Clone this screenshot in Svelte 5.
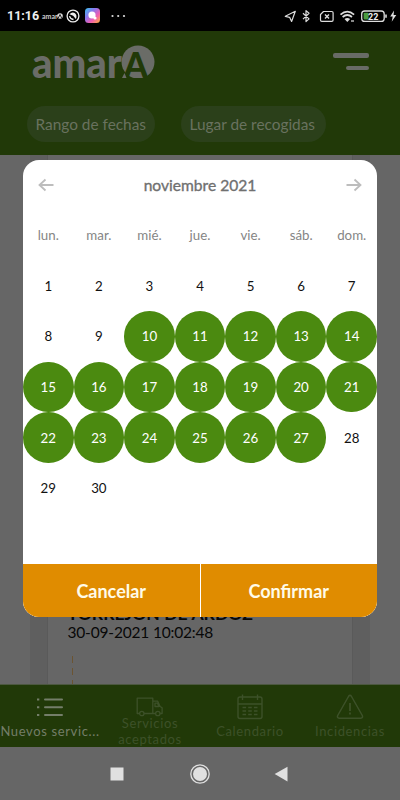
<script>
  const weekdays = ['lun.', 'mar.', 'mié.', 'jue.', 'vie.', 'sáb.', 'dom.'];
  const days = Array.from({ length: 30 }, (_, i) => i + 1);
  const inRange = (day) => day >= 10 && day <= 27;
</script>

<div class="screen">
  <div class="status">
    <span class="clock">11:16</span>
    <span class="mini">amar</span>
    <svg class="minidot" width="6" height="6" viewBox="0 0 6 6"><circle cx="3" cy="3" r="2.8" fill="#ddd" /><path d="M1.3 5 3 1.5 4.6 5" stroke="#222" fill="none" /></svg>
    <svg class="disc" width="14" height="14" viewBox="0 0 14 14"><circle cx="7" cy="7" r="5.9" fill="none" stroke="#eee" stroke-width="1.3" /><path d="M3.500 5.200Q6 2.500 9 4.200 11.500 6.500 9.800 10L7.200 6.800Z" fill="#eee" /><path d="M3.500 7.200q.8 3 4 3.300" fill="none" stroke="#eee" stroke-width="1.300" /></svg>
    <svg class="gallery" width="15" height="15" viewBox="0 0 15 15">
      <defs><linearGradient id="rainbow" x1="0" y1="0" x2="1" y2="1"><stop offset="0" stop-color="#35c5ee" /><stop offset=".35" stop-color="#8978ee" /><stop offset=".65" stop-color="#ef5db2" /><stop offset="1" stop-color="#ffb43b" /></linearGradient></defs>
      <rect width="15" height="15" rx="3.5" fill="url(#rainbow)" /><circle cx="7" cy="7" r="3.6" fill="#fff" /><circle cx="10" cy="10" r="1.6" fill="#fff" />
    </svg>
    <svg class="more" width="15" height="4" viewBox="0 0 15 4" fill="#ddd"><circle cx="1.5" cy="2" r="1.1" /><circle cx="7.2" cy="2" r="1.1" /><circle cx="13" cy="2" r="1.1" /></svg>
    <svg class="system" width="116" height="16" viewBox="284 7 116 16" fill="none" stroke="#ddd" stroke-width="1.2" stroke-linejoin="round">
      <path d="m285.3 15.3 10-5-3.7 10.2-2-4.2Z" />
      <path d="m303 12.2 6 5.7-3 2.7V9.6l3 2.7-6 5.8" />
      <path d="M323.5 10.5h8.3q1.3 0 1.3 1.3v7.2q0 1.3-1.3 1.3h-10q-1.3 0-1.3-1.3v-5.5Z" /><path d="m325 13.5 4 4m0-4-4 4" stroke-width="1.4" />
      <path d="M340.500 13.600q6.800-5.800 13.600 0M342.600 16q4.700-4 9.400 0" stroke-width="1.700" /><path d="M344.500 18q2.800-2.200 5.600 0l-2.800 3Z" fill="#ddd" stroke="none" /><path d="M351 19h3v2h-3Z" fill="#888" stroke="none" />
      <rect x="361.700" y="10" width="22.500" height="10.400" rx="3" stroke-width="1.300" /><rect x="363.600" y="11.800" width="5" height="6.800" rx="1" fill="#4b9b40" stroke="none" /><path d="M386 13.500v3.200" stroke-width="1.600" />
      <text x="373.200" y="18.500" text-anchor="middle" fill="#eee" stroke="none" font-family="Roboto, sans-serif" font-size="9" font-weight="700">22</text>
      <path d="m394 9.500-3.800 6h2.500l-1 5.200 4.600-6.800h-2.700Z" fill="#ddd" stroke="none" />
    </svg>
  </div>

  <header>
    <div class="brand">
      <svg class="logo" width="126" height="48" viewBox="0 0 126 48">
        <defs><clipPath id="badge"><path d="M88 0h38v29.500L117 33H88Z" /></clipPath></defs>
        <text x="0" y="33" font-family="Lato, sans-serif" font-size="42.500" font-weight="900" textLength="90" lengthAdjust="spacingAndGlyphs" fill="#6a6c67">amar</text>
        <circle cx="106" cy="17" r="16.500" fill="#6a6c67" clip-path="url(#badge)" />
        <text x="91.500" y="33" font-family="Lato, sans-serif" font-size="35.500" font-weight="900" textLength="24.500" lengthAdjust="spacingAndGlyphs" fill="#213908">A</text>
        <path d="M90 33 92.500 28l2 5Z" fill="#6a6c67" />
      </svg>
      <div class="burger"><i></i><i></i></div>
    </div>
    <div class="filters">
      <span class="chip dates">Rango de fechas</span>
      <span class="chip place">Lugar de recogidas</span>
    </div>
  </header>

  <main>
    <div class="track">
      <article>
        <div class="town">TORREJON DE ARDOZ</div>
        <div class="stamp">30-09-2021 10:02:48</div>
        <div class="dash"></div>
      </article>
    </div>
  </main>

  <nav class="tabs">
    <div class="tab active">
      <svg width="28" height="28" viewBox="0 0 28 28" fill="none" stroke="currentColor" stroke-width="2"><path d="M9 5.500h17M9 13.200h17M9 21h17" stroke-linecap="round" /><path d="M1 5.500h2.300M1 13.200h2.300M1 21h2.300" /></svg>
      <span>Nuevos servic...</span>
    </div>
    <div class="tab">
      <svg width="28" height="28" viewBox="0 0 28 28" fill="none" stroke="currentColor" stroke-width="1.300" stroke-linejoin="round"><path d="M3.500 19.500H1.200V4.200h15.600v15.300H8M17 7.200h4.700l2.400 5.300 2 1.200v5.800h-2M19 19.500h-2M19 9.200h2.500l1.500 3.300h-4Z" /><circle cx="5.800" cy="19.500" r="2.200" /><circle cx="21.800" cy="19.500" r="2.200" /></svg>
      <span class="two">Servicios<br />aceptados</span>
    </div>
    <div class="tab">
      <svg width="28" height="28" viewBox="0 0 28 28" fill="none" stroke="currentColor" stroke-width="1.400"><rect x="2" y="3" width="24" height="21.500" rx="2" /><path d="M2 10h24M6.500 .5v5.500M21.500 .5v5.500" /><path d="M6.500 13.500h15M6.500 17h15M6.500 20.500h15" stroke-dasharray="3.600 2.100" stroke-width="1.500" /></svg>
      <span>Calendario</span>
    </div>
    <div class="tab">
      <svg width="28" height="28" viewBox="0 0 28 28" fill="none" stroke="currentColor" stroke-width="1.500" stroke-linejoin="round"><path d="M12.500 2.500Q14 .2 15.500 2.500L26.300 21.500q1 2.500-1.500 2.800H3.200Q.7 24 1.700 21.500Z" /><path d="M14 9v8M14 18.500v2" stroke-width="1.800" /></svg>
      <span>Incidencias</span>
    </div>
  </nav>

  <div class="system-nav">
    <svg width="200" height="24" viewBox="0 0 200 24" fill="#e0e0e0"><rect x="10.500" y="6.500" width="13" height="13" /><circle cx="100" cy="13" r="7" /><circle cx="100" cy="13" r="9.200" fill="none" stroke="#e0e0e0" stroke-width="1.300" /><path d="M187.500 5.700v14.800l-12.800-7.400Z" /></svg>
  </div>

  <section class="dialog">
    <div class="month">
      <svg width="16" height="14" viewBox="0 0 16 14"><path d="M15.500 7H1.500M7.500 1.500 1.500 7l6 5.500" /></svg>
      <h2>noviembre 2021</h2>
      <svg width="16" height="14" viewBox="0 0 16 14"><path d="M.5 7h14M8.500 1.500l6 5.500-6 5.500" /></svg>
    </div>
    <div class="grid">
      {#each weekdays as name}<span class="weekday">{name}</span>{/each}
      {#each days as day}<span class="day" class:selected={inRange(day)}>{day}</span>{/each}
    </div>
    <div class="actions"><button>Cancelar</button><button>Confirmar</button></div>
  </section>
</div>

<style>
  .screen { position: relative; width: 400px; height: 800px; display: flex; flex-direction: column; overflow: hidden; background: #666; font-family: Lato, "Noto Sans", sans-serif; }
  .screen * { box-sizing: border-box; }
  svg { display: block; flex: none; }
  .logo { overflow: visible; }
  .status { height: 31px; flex: none; background: #000; display: flex; align-items: center; padding-left: 7px; }
  .clock { width: 33px; color: #eee; font: 700 12.500px/16px Roboto, sans-serif; white-space: nowrap; }
  .mini { color: #ccc; font-size: 7px; font-weight: 700; margin-left: 2px; width: 15px; }
  .disc { margin-left: 3px; }
  .gallery { margin-left: 5px; }
  .more { margin-left: 11px; }
  .system { margin-left: auto; }
  header { height: 124px; flex: none; background: #213908; }
  .brand { height: 75px; display: flex; justify-content: space-between; align-items: flex-start; padding: 14px 31px 0 32px; }
  .burger { width: 36px; padding-top: 8px; display: flex; flex-direction: column; align-items: flex-end; gap: 8px; }
  .burger i { width: 36px; height: 4.500px; border-radius: 2px; background: #686b66; }
  .burger i + i { width: 23px; }
  .filters { display: flex; gap: 26px; padding-left: 27px; }
  .chip { height: 36px; border-radius: 18px; background: #2b401a; color: #69725f; font-size: 15.400px; line-height: 36px; white-space: nowrap; padding-left: 8.500px; }
  .dates { width: 128px; }
  .place { width: 145px; }
  main { height: 529px; flex: none; display: flex; justify-content: center; }
  .track { width: 340px; background: #5f5f5f; display: flex; justify-content: center; }
  article { width: 306px; background: #666; padding: 450px 0 0 19.500px; border: solid #5a5a5a; border-width: 0 1px; color: #080808; }
  .town { font-size: 17.600px; line-height: 18px; font-weight: 700; }
  .stamp { font-size: 15.500px; line-height: 18px; letter-spacing: -.18px; }
  .dash { margin: 15px 0 0 4px; height: 28px; width: 1.500px; background: repeating-linear-gradient(#6b5432 0 7px, transparent 7px 12px); }
  .tabs { height: 63px; flex: none; background: #213908; border-top: 1px solid #4c5840; display: grid; grid-template-columns: repeat(4, 100px); color: #3d5129; }
  .tab { display: flex; flex-direction: column; align-items: center; padding-top: 9px; font-size: 13px; line-height: 16px; letter-spacing: .63px; text-align: center; white-space: nowrap; }
  .tab span { margin-top: 1px; }
  .tab .two { margin-top: -7px; }
  .active { color: #747e69; }
  .system-nav { height: 53px; flex: none; display: flex; justify-content: center; padding-top: 14px; }
  .dialog { position: absolute; left: 23px; top: 160px; width: 354px; height: 457px; border-radius: 16px; overflow: hidden; background: #fff; display: flex; flex-direction: column; }
  .month { height: 50px; flex: none; display: flex; align-items: center; justify-content: space-between; padding: 0 15px; }
  .month path { fill: none; stroke: #bdbdbd; stroke-width: 1.800; }
  h2 { margin: 0; color: #707070; font-size: 15.600px; font-weight: 400; -webkit-text-stroke: .35px #707070; line-height: 20px; }
  .grid { flex: 1; display: grid; grid-template-columns: repeat(7, 1fr); grid-auto-rows: 50.571px; align-content: start; }
  .grid span { display: flex; align-items: center; justify-content: center; font-size: 13.300px; }
  .grid .weekday { color: #858585; }
  .day { color: #111; border-radius: 50%; }
  .day.selected { background: #4b8a10; color: #fff; }
  .actions { height: 53px; flex: none; display: flex; gap: 1px; background: #fff; }
  button { flex: 1; border: 0; padding: 0; background: #e08c00; color: #fffbe8; font: 700 18px/22px Lato, sans-serif; }
</style>
